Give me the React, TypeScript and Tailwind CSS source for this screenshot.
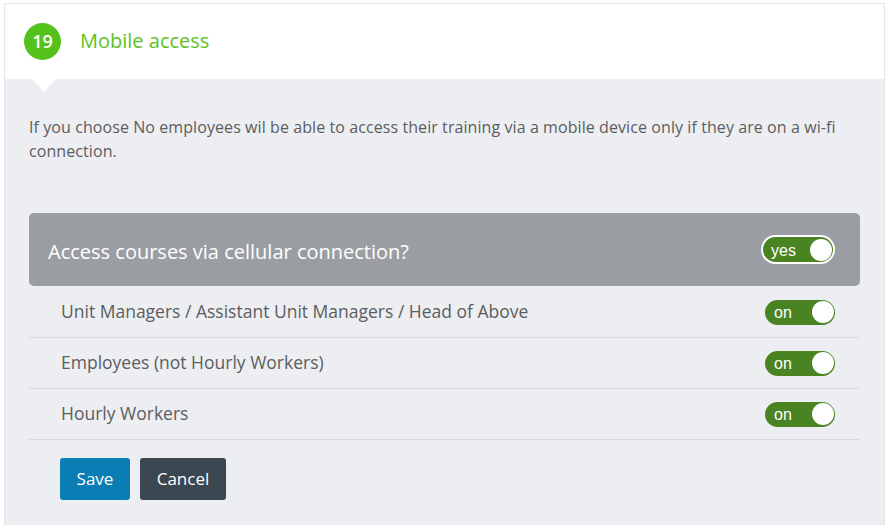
import React from 'react';

const rows = [
  'Unit Managers / Assistant Unit Managers / Head of Above',
  'Employees (not Hourly Workers)',
  'Hourly Workers',
];

const Toggle: React.FC<{ label: string; outlined?: boolean }> = ({ label, outlined }) => (
  <div
    className={`flex items-center justify-between rounded-full bg-[#4a8322] ${
      outlined ? 'w-[74px] h-[29px] border-2 border-white pl-[8px] pr-[1px]' : 'w-[70px] h-[25px] pl-[9px] pr-[1px]'
    }`}
  >
    <span className="text-white text-[16px] leading-none mt-[2px] font-['Liberation_Sans',Arial,sans-serif]">{label}</span>
    <span className="w-[22px] h-[22px] rounded-full bg-white"></span>
  </div>
);

export default function App() {
  return (
    <div className="w-[890px] h-[528px] bg-white pt-[3px] pl-[4px] font-['Open_Sans','Noto_Sans',sans-serif]">
      <div className="w-[881px] border border-[#e4e5e8] border-b-0 flex flex-col">
        <header className="relative h-[75px] bg-white flex items-center pl-[19px] gap-[19px]">
          <div className="w-[37px] h-[37px] rounded-full bg-[#55c21b] flex items-center justify-center text-white text-[18px] font-semibold">
            19
          </div>
          <h2 className="text-[20px] text-[#5cc221] -mt-[2px]">Mobile access</h2>
          <span className="absolute left-[27px] top-full w-0 h-0 border-l-[12px] border-r-[12px] border-t-[13px] border-l-transparent border-r-transparent border-t-white"></span>
        </header>

        <div className="bg-[#edeef2] px-[24px] pt-[36px] pb-[25px]">
          <p className="text-[16px] tracking-[0.08px] leading-[24px] text-[#5b5d60] pr-[10px]">
            If you choose No employees wil be able to access their training via a mobile device only if they are on a wi-fi connection.
          </p>

          <div className="mt-[50px] h-[73px] rounded-[5px] bg-[#9a9ea3] flex items-center justify-between pl-[19px] pr-[25px] pt-[4px]">
            <span className="text-white text-[20px]">Access courses via cellular connection?</span>
            <div className="-mt-[4px]">
              <Toggle label="yes" outlined />
            </div>
          </div>

          <div className="pt-[1px]">
            {rows.map((r) => (
              <div key={r} className="h-[51px] border-b border-[#d9dadd] flex items-center justify-between pl-[32px] pr-[25px]">
                <span className="text-[17.5px] text-[#5b5d60] -mt-[2px]">{r}</span>
                <Toggle label="on" />
              </div>
            ))}
          </div>

          <div className="flex gap-[10px] pl-[31px] mt-[18px]">
            <button className="h-[42px] w-[70px] rounded-[3px] bg-[#0b7db5] text-white text-[17px]">Save</button>
            <button className="h-[42px] w-[86px] rounded-[3px] bg-[#3a4650] text-white text-[17px]">Cancel</button>
          </div>
        </div>
      </div>
    </div>
  );
}
